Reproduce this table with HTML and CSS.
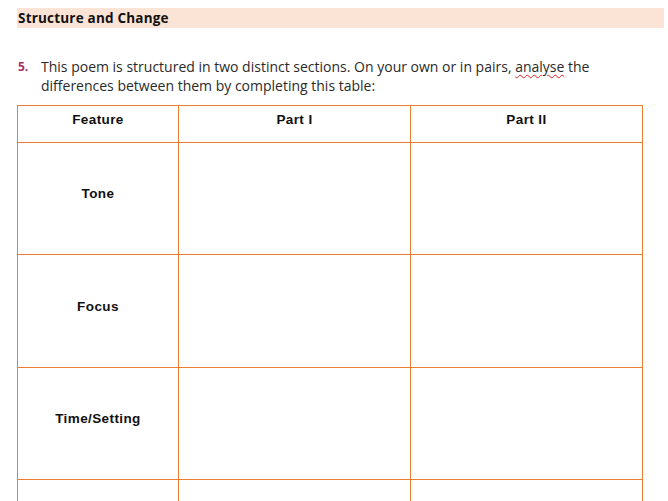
FILE: index.html
```html
<!DOCTYPE html>
<html>
<head>
<meta charset="utf-8">
<link rel="stylesheet" href="styles.css">
</head>
<body>
<div class="page">
  <div class="section-heading">Structure and Change</div>
  <div class="question">
    <span class="qnum">5.</span>
    <p class="qtext">This poem is structured in two distinct sections. On your own or in pairs, <span class="spell">analyse</span> the differences between them by completing this table:</p>
  </div>
  <table class="grid">
    <colgroup>
      <col class="c1"><col class="c2"><col class="c3">
    </colgroup>
    <tr class="head"><th>Feature</th><th>Part I</th><th>Part II</th></tr>
    <tr class="row"><th>Tone</th><td></td><td></td></tr>
    <tr class="row tall"><th>Focus</th><td></td><td></td></tr>
    <tr class="row"><th>Time/Setting</th><td></td><td></td></tr>
    <tr class="row"><th></th><td></td><td></td></tr>
  </table>
</div>
</body>
</html>
```
FILE: styles.css
```css
html, body {
  margin: 0;
  padding: 0;
  background: #ffffff;
  overflow: hidden;
  height: 501px;
}
.page {
  padding: 8px 0 0 17px;
  width: 647px;
}
.section-heading {
  background: #fbe4d5;
  height: 20px;
  line-height: 20px;
  padding-left: 1px;
  font-family: "Open Sans", sans-serif;
  font-weight: 700;
  font-size: 13.5px;
  letter-spacing: 0.2px;
  color: #111;
}
.question {
  display: flex;
  margin-top: 29px;
  font-family: "Open Sans", sans-serif;
  font-size: 14px;
  line-height: 19px;
  color: #2a2a2a;
}
.qnum {
  width: 23px;
  flex: none;
  padding-left: 1px;
  color: #a3336b;
  font-weight: 700;
  font-size: 12px;
}
.qtext {
  margin: 0;
  width: 565px;
}
.spell {
  text-decoration: underline wavy #e02020;
  text-decoration-thickness: 1px;
  text-underline-offset: 2px;
}
.grid {
  margin-top: 10px;
  border-collapse: collapse;
  table-layout: fixed;
  width: 626px;
  font-family: "Liberation Sans", Arial, sans-serif;
  font-size: 13.5px;
  letter-spacing: 0.4px;
  color: #111;
}
.c1 { width: 161px; }
.c2 { width: 232px; }
.c3 { width: 232px; }
.grid th, .grid td {
  border: 1px solid #ed7d31;
  padding: 0;
}
.grid th {
  font-weight: 700;
  text-align: center;
}
.head th {
  height: 37px;
  vertical-align: top;
  padding-top: 6px;
  box-sizing: border-box;
}
.row th, .row td {
  height: 112px;
  box-sizing: border-box;
  vertical-align: middle;
  padding-bottom: 10px;
}
.tall th, .tall td {
  height: 113px;
}
```
